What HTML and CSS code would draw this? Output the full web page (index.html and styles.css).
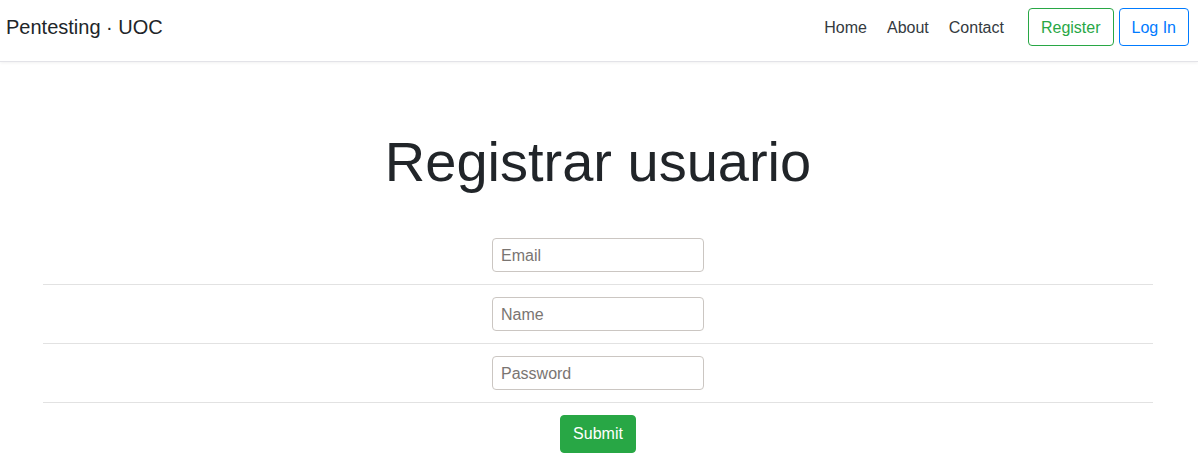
FILE: index.html
```html
<!DOCTYPE html>
<html lang="es">
<head>
<meta charset="utf-8">
<title>Registrar usuario</title>
<link rel="stylesheet" href="styles.css">
</head>
<body>
<header class="navbar">
  <a class="brand" href="#">Pentesting · UOC</a>
  <nav class="nav">
    <a class="nav-link" href="#">Home</a>
    <a class="nav-link" href="#">About</a>
    <a class="nav-link" href="#">Contact</a>
  </nav>
  <div class="actions">
    <a class="btn btn-outline-success" href="#">Register</a>
    <a class="btn btn-outline-primary" href="#">Log In</a>
  </div>
</header>
<main class="container">
  <h1 class="title">Registrar usuario</h1>
  <form class="form">
    <div class="row"><input class="field" type="email" placeholder="Email"></div>
    <hr class="sep">
    <div class="row"><input class="field" type="text" placeholder="Name"></div>
    <hr class="sep">
    <div class="row"><input class="field" type="password" placeholder="Password"></div>
    <hr class="sep">
    <div class="row"><button class="submit" type="button">Submit</button></div>
  </form>
</main>
</body>
</html>
```
FILE: styles.css
```css
* { box-sizing: border-box; }
html, body { margin: 0; padding: 0; }
body {
  font-family: "Liberation Sans", Arial, sans-serif;
  color: #212529;
  background: #fff;
  font-size: 16px;
  line-height: 1.5;
}
a { text-decoration: none; }
.navbar {
  height: 62px;
  display: flex;
  align-items: flex-start;
  padding: 8px 9px 0 6px;
  background: #fff;
  border-bottom: 1px solid #e3e3e8;
  box-shadow: 0 1px 3px rgba(0,0,0,0.06);
}
.brand {
  font-size: 20px;
  line-height: 38px;
  color: #212529;
  margin-right: auto;
}
.nav { display: flex; }
.nav-link {
  display: block;
  padding: 1px 10px 0;
  line-height: 38px;
  font-size: 16px;
  color: #343a40;
}
.actions {
  display: flex;
  gap: 5px;
  margin-left: 14px;
}
.btn {
  display: inline-block;
  height: 38px;
  line-height: 34px;
  padding: 2px 12px 0;
  border: 1px solid;
  border-radius: 4px;
  font-size: 16px;
}
.btn-outline-success { color: #28a745; border-color: #28a745; }
.btn-outline-primary { color: #007bff; border-color: #007bff; }
.container {
  width: 1110px;
  margin: 0 0 0 calc(50% - 556px);
}
.title {
  margin: 66px 0 43px;
  text-align: center;
  font-size: 56px;
  font-weight: 300;
  line-height: 1.2;
  color: #212529;
}
.form { display: flex; flex-direction: column; }
.row { display: flex; justify-content: center; }
.field {
  width: 212px;
  height: 34px;
  padding: 5px 8px 3px;
  border: 1px solid #cbc6c2;
  border-radius: 4px;
  font-family: "Liberation Sans", Arial, sans-serif;
  font-size: 16px;
  color: #495057;
  background: #fff;
}
.field::placeholder { color: #7a7572; }
.sep {
  margin: 12px 0 12px;
  border: 0;
  border-top: 1px solid #e2e2e2;
  height: 0;
}
.submit {
  height: 38px;
  padding: 0 12px;
  border: 1px solid #28a745;
  border-radius: 4px;
  background: #28a745;
  color: #fff;
  font-family: "Liberation Sans", Arial, sans-serif;
  font-size: 16px;
}
```
